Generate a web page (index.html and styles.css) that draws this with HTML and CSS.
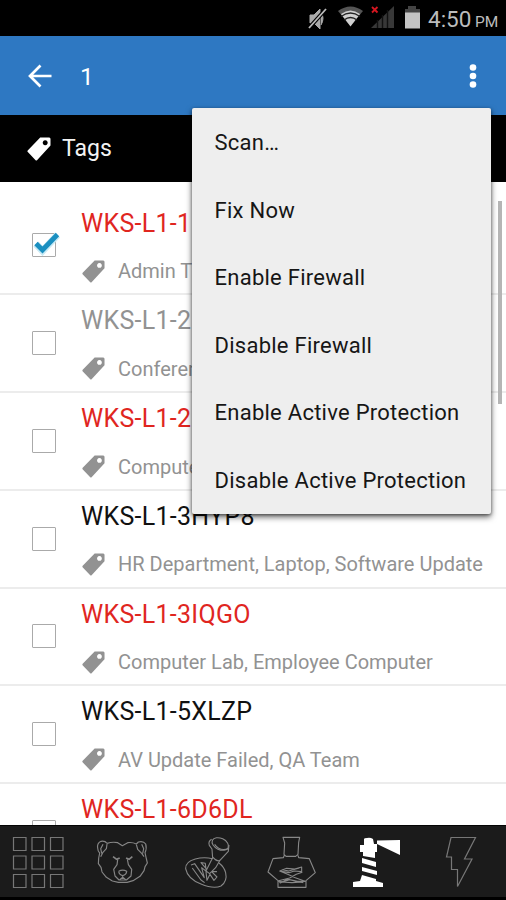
FILE: index.html
```html
<!DOCTYPE html>
<html lang="en">
<head>
<meta charset="utf-8">
<title>Tags</title>
<link rel="stylesheet" href="styles.css">
</head>
<body>
<svg class="defs" width="0" height="0" aria-hidden="true">
  <symbol id="tag" viewBox="0 0 24 24"><path fill-rule="evenodd" d="M13.2.5H22.4L23.5 1.6V8.6L10 23.2Q9.3 23.9 8.6 23.2L.6 14.8Q0 14.1.7 13.4ZM18.2 3.2a2.5 2.5 0 1 0 .01 0Z"/></symbol>
</svg>
<div class="screen">
  <header class="status">
    <svg class="status-icons" width="120" height="36" viewBox="300 0 120 36">
      <path d="M310 15h4l6-6v20l-6-6h-4zM321 12q4 6 0 13" fill="#aaa" stroke="#aaa"/>
      <path d="M309 28L326 9" stroke="#000" stroke-width="4"/>
      <path d="M309 28L326 9" stroke="#bbb" stroke-width="1.8"/>
      <path d="M338 11Q350.500 2 363 11L350.500 26Z" fill="#555"/>
      <path d="M341 14Q350.500 7 360 14L350.500 26.500Z" fill="#d0d0d0"/>
      <path d="M341 16.500Q350.500 9.500 360 16.500M344 20Q350.500 15 357 20" fill="none" stroke="#222" stroke-width="1.300"/>
      <path d="M371 28L394 6V28Z" fill="#383838"/>
      <path d="M377.500 20v8M382.500 15v13M387.500 10v18" stroke="#111" stroke-width="1.400"/>
      <path d="M372 7l5.500 5.500M377.500 7l-5.500 5.500" stroke="#d51620" stroke-width="1.800"/>
      <path d="M408 6h8v3h4v4h-15v-4h3z" fill="#444"/><path d="M405 12.500h15v16h-15z" fill="#c4c4c4"/>
    </svg>
    <span class="clock">4:50</span><span class="meridiem">PM</span>
  </header>
  <div class="actionbar">
    <svg class="back" width="24" height="24" viewBox="0 0 24 24"><path d="M12.500 1.500L2 12L12.500 22.500M2.500 12H23.500" fill="none" stroke="#fff" stroke-width="2.700"/></svg>
    <span class="count">1</span>
    <svg class="more" width="8" height="26" viewBox="0 0 8 26"><g fill="#fff"><circle cx="4" cy="4.500" r="3.300"/><circle cx="4" cy="13" r="3.300"/><circle cx="4" cy="21.500" r="3.300"/></g></svg>
  </div>
  <div class="tagbar"><svg class="tag-lg"><use href="#tag"/></svg><span class="tags-label">Tags</span></div>
  <main class="list">
    <div class="row">
      <span class="box"><svg class="check" width="28" height="24" viewBox="0 0 28 24"><path d="M3 12L9.500 19L24.500 3" fill="none" stroke="#c9eaf5" stroke-width="7"/><path d="M3 11.500L9.500 18L24.500 2.500" fill="none" stroke="#1a8fc0" stroke-width="4.800"/></svg></span>
      <div class="info"><div class="name red">WKS-L1-1</div><div class="sub"><svg class="tag-sm"><use href="#tag"/></svg><span>Admin T</span></div></div>
    </div>
    <div class="row"><span class="box"></span><div class="info"><div class="name grey">WKS-L1-2</div><div class="sub"><svg class="tag-sm"><use href="#tag"/></svg><span>Conference</span></div></div></div>
    <div class="row"><span class="box"></span><div class="info"><div class="name red">WKS-L1-2</div><div class="sub"><svg class="tag-sm"><use href="#tag"/></svg><span>Computer</span></div></div></div>
    <div class="row"><span class="box"></span><div class="info"><div class="name">WKS-L1-3HYP8</div><div class="sub"><svg class="tag-sm"><use href="#tag"/></svg><span>HR Department, Laptop, Software Update</span></div></div></div>
    <div class="row"><span class="box"></span><div class="info"><div class="name red">WKS-L1-3IQGO</div><div class="sub"><svg class="tag-sm"><use href="#tag"/></svg><span>Computer Lab, Employee Computer</span></div></div></div>
    <div class="row"><span class="box"></span><div class="info"><div class="name">WKS-L1-5XLZP</div><div class="sub"><svg class="tag-sm"><use href="#tag"/></svg><span>AV Update Failed, QA Team</span></div></div></div>
    <div class="row"><span class="box"></span><div class="info"><div class="name red">WKS-L1-6D6DL</div></div></div>
    <div class="scrollbar"></div>
  </main>
  <nav class="nav">
    <svg viewBox="0 0 84 72"><g fill="none" stroke="#777" stroke-width="1.200"><path d="M13.500 12.500h12.500v13h-12.500zM32 12.500h12.500v13h-12.500zM50.500 12.500h12.500v13h-12.500zM13.500 31h12.500v13h-12.500zM32 31h12.500v13h-12.500zM50.500 31h12.500v13h-12.500zM13.500 49.500h12.500v13h-12.500zM32 49.500h12.500v13h-12.500zM50.500 49.500h12.500v13h-12.500z"/></g></svg>
    <svg viewBox="0 0 84 72"><g transform="translate(7.700 5) scale(.3333)" fill="none" stroke="#858585" stroke-width="3.500" stroke-linejoin="round"><path d="M46 40Q40 32 28 34Q15 40 18 55Q18 63 24 69L21 84L20 101L28 112L31 126L44 142L62 153L80 157H106L124 152L145 139L157 122L160 110L167 99L163 82L160 68Q166 56 162 42Q155 32 140 36L134 42Q122 36 108 38L92 47L78 38Q62 35 46 40"/><path d="M46 42L44 56L33 68L27 80M34 43L27 56L30 70M134 44L138 58L150 70L157 80M150 43L156 56L153 70"/><path d="M64 80L75 88L84 84M122 80L112 88L103 84" stroke-width="5"/><path d="M78 88L76 104L66 118L70 138L82 150H104L118 138L120 118L110 104L107 88M81 124Q93 117 105 124Q104 134 93 137Q82 134 81 124M93 137V142L84 149M93 142L102 149"/></g></svg>
    <svg viewBox="0 0 84 72"><g transform="translate(11.300 5) scale(.3333)" fill="none" stroke="#888" stroke-width="3.300" stroke-linejoin="round"><path d="M97 86Q70 80 45 87Q15 95 16 116Q22 147 62 162Q100 178 122 168Q142 154 136 128Q131 110 116 99"/><ellipse cx="120" cy="42" rx="26" ry="17" transform="rotate(25 120 42)"/><path d="M94 28Q83 34 87 46L95 57L97 83L77 123L88 131L106 113L119 91L144 64L146 45M103 43Q118 65 144 56M98 82Q110 96 119 91M32 105L43 101L72 143L64 113L78 124L75 100L62 98L80 119M36 114L62 150L73 158M77 124L80 151L89 133L101 151L110 141L94 125L110 125"/></g></svg>
    <svg viewBox="0 0 84 72"><g transform="translate(9 5) scale(.3333)" fill="none" stroke="#888" stroke-width="3.300" stroke-linejoin="round"><path d="M63 22H113L110 37L108 73L101 79H72L66 73L68 39ZM67 76L64 83L33 86L18 126L48 152V172H132V152L160 128L142 86L110 83L108 76M48 153Q90 163 132 153"/><path d="M53 123L74 115L98 117L119 111V125L97 123L81 128L53 123L77 133L100 143L129 154L100 154L77 147L55 159L50 152L83 144L103 133L121 127M61 119L80 123L112 114M61 157L82 149L124 158"/></g></svg>
    <svg viewBox="0 0 84 72"><path fill="#fff" d="M27 14Q27 13 30 13Q33 12 36 14L37 19H40V27H38V33L26 31V27H23V20H27ZM40 15.500L63 15V30L40 19ZM25 33L39 37V42L25 38ZM25 42L40 46V50L25 46ZM25 50L39 54V56L46 58V62H16V57L23 56Z"/></svg>
    <svg viewBox="0 0 84 72"><path d="M29 12.500H53.500L42.500 34H50L35.500 61.500V44.500H29.500V32H24.500Z" fill="none" stroke="#777" stroke-width="1.200"/></svg>
  </nav>
  <div class="menu">
    <div class="item">Scan…</div>
    <div class="item">Fix Now</div>
    <div class="item">Enable Firewall</div>
    <div class="item">Disable Firewall</div>
    <div class="item">Enable Active Protection</div>
    <div class="item">Disable Active Protection</div>
  </div>
</div>
</body>
</html>
```
FILE: styles.css
```css
* { box-sizing: border-box; }
body { margin: 0; font-family: Roboto, sans-serif; background: #000; }
svg { display: block; flex: none; }
.defs { position: absolute; }
.screen { position: relative; width: 506px; height: 900px; overflow: hidden; display: flex; flex-direction: column; background: #000; }
.status { height: 36px; flex: none; display: flex; align-items: baseline; padding-left: 300px; color: #bcbcbc; line-height: 39px; white-space: nowrap; }
.status-icons { align-self: flex-start; margin-right: 8px; }
.clock { width: 43px; font-size: 22.5px; }
.meridiem { font-size: 15.5px; margin-left: 4px; }
.actionbar { height: 79px; flex: none; background: #2e78c2; display: flex; align-items: center; padding: 0 29px 0 28px; color: #fff; }
.count { font-size: 24.5px; margin-left: 28px; padding-top: 2px; }
.more { margin-left: auto; }
.tagbar { height: 67px; flex: none; display: flex; align-items: center; padding-left: 27px; color: #f3f3f3; fill: #fff; }
.tag-lg { width: 24px; height: 24px; }
.tags-label { font-size: 23px; margin-left: 11px; }
.list { position: relative; height: 643px; flex: none; overflow: hidden; background: #fff; padding-top: 15.5px; }
.row { height: 97.75px; display: flex; align-items: center; padding-left: 32px; border-bottom: 2px solid #ececec; }
.box { position: relative; width: 24px; height: 24px; flex: none; border: 1.5px solid #aaa; border-radius: 1px; }
.check { position: absolute; left: 0; top: -2px; }
.info { align-self: flex-start; margin-left: 25px; white-space: nowrap; }
.name { height: 51px; line-height: 52.5px; font-size: 25px; letter-spacing: 0.28px; color: #111; }
.red { color: #e0261f; }
.grey { color: #929292; }
.sub { height: 45px; display: flex; align-items: center; font-size: 20px; color: #929292; fill: #929292; }
.tag-sm { width: 23px; height: 23px; margin: 0 13px 0 1px; }
.scrollbar { position: absolute; right: 4px; top: 19px; width: 4px; height: 203px; background: #b5b5b5; }
.nav { height: 72px; flex: none; display: grid; grid-template-columns: repeat(6, 1fr); background: #1b1b1b; border-top: 1px solid #050505; }
.nav svg { width: 84px; height: 72px; margin-top: -1px; }
.menu { position: absolute; left: 191.500px; top: 108px; width: 299px; height: 406px; background: #eee; border-radius: 2px; box-shadow: 0 3px 6px rgba(0,0,0,.6), 0 1px 3px rgba(0,0,0,.4); padding: 1px 0 0 23px; }
.item { height: 67.6px; line-height: 68px; font-size: 22px; letter-spacing: 0.26px; color: #161616; white-space: nowrap; }
```
